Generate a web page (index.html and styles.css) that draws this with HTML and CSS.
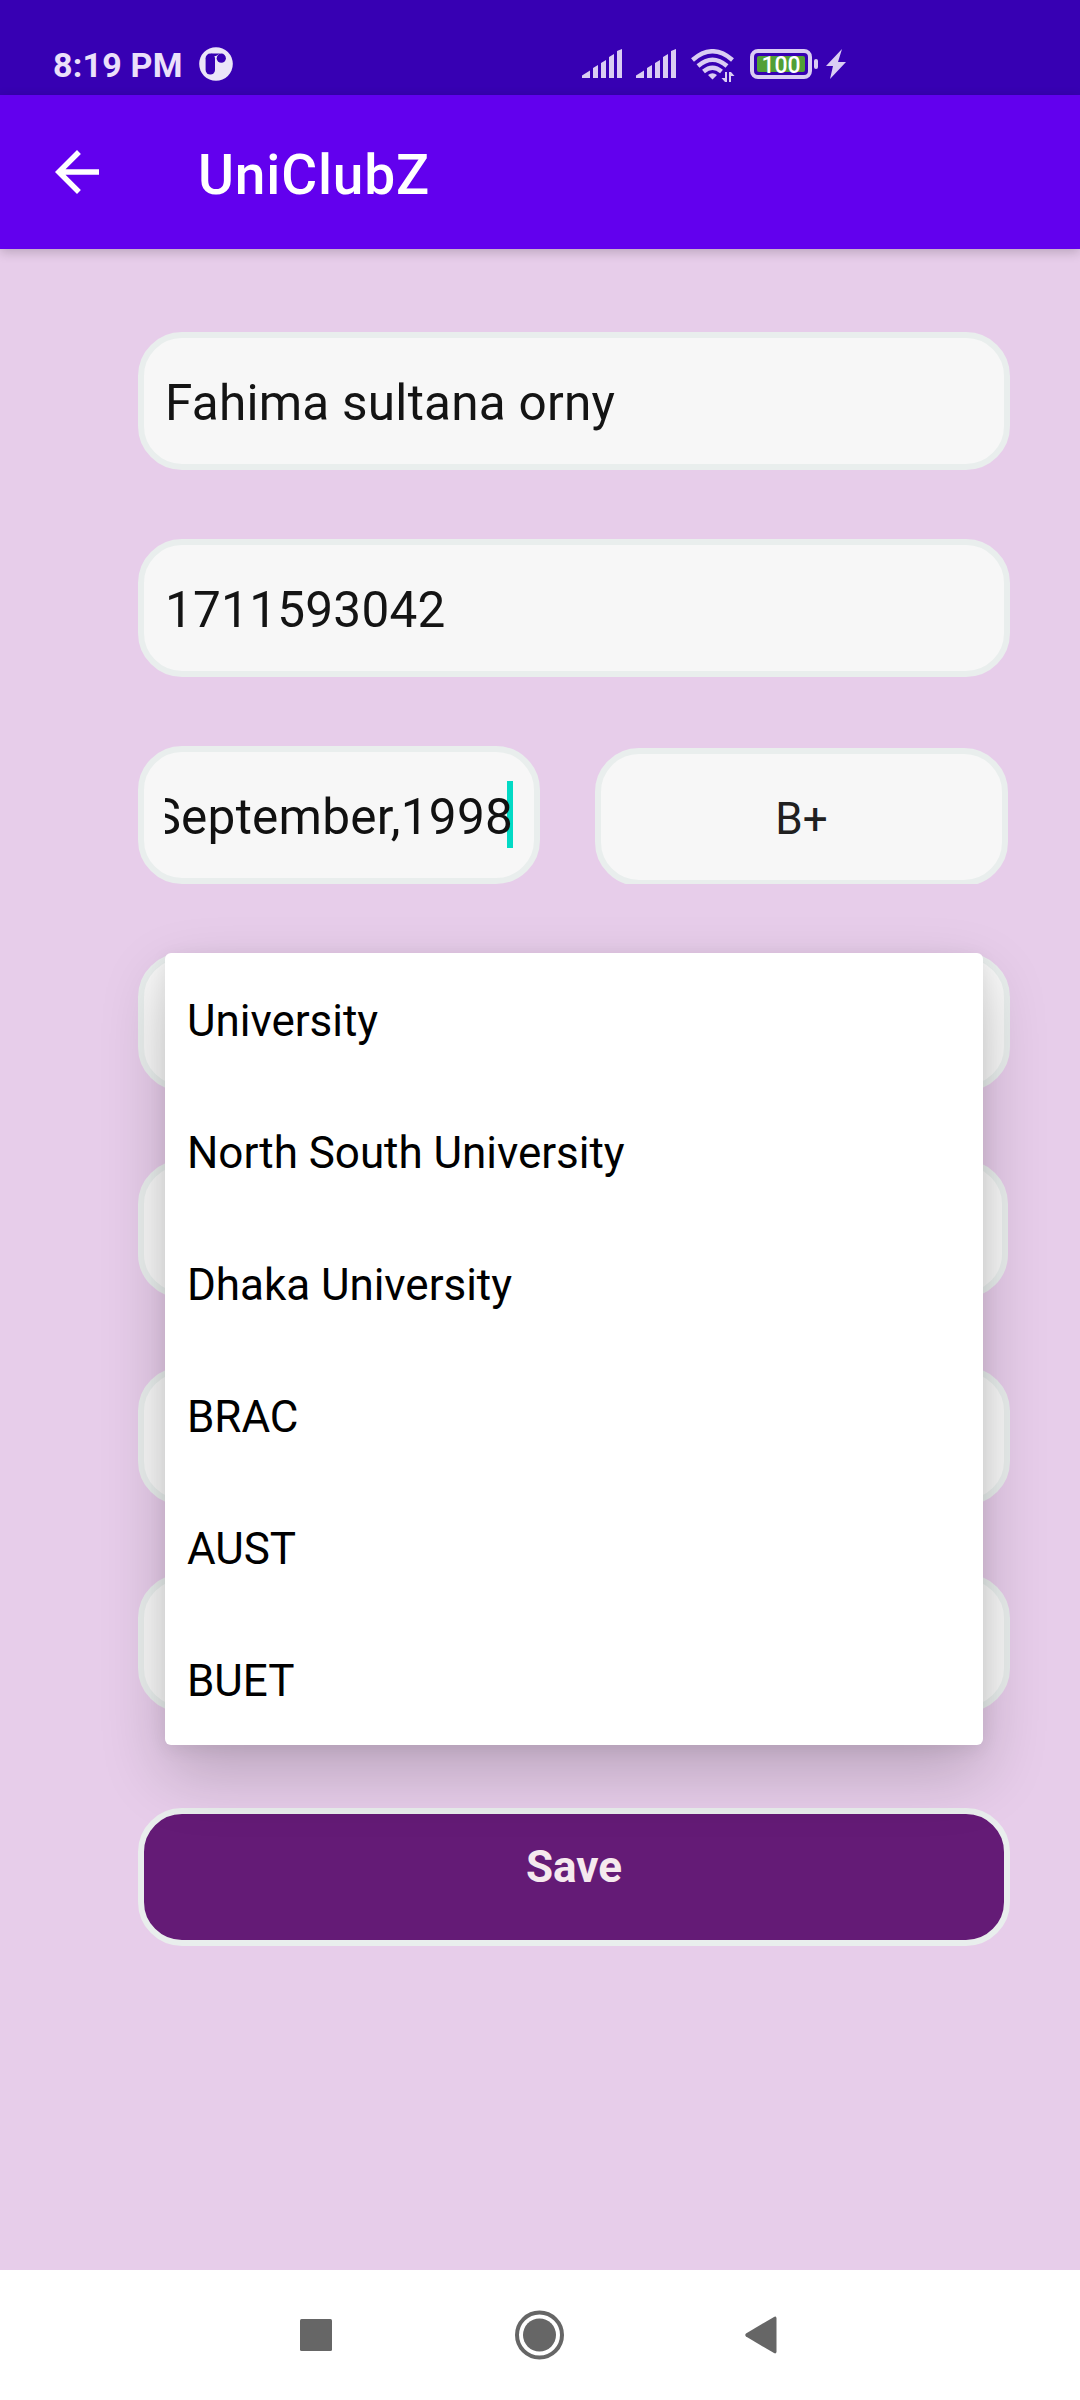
FILE: index.html
```
<!DOCTYPE html>
<html lang="en">
<head>
<meta charset="utf-8">
<title>UniClubZ</title>
<link rel="stylesheet" href="styles.css">
</head>
<body>
<div class="screen">
  <header class="status">
    <span class="time">8:19 PM</span>
    <svg class="notif" width="34" height="34" viewBox="0 0 34 34"><circle cx="17" cy="17" r="16.8" fill="#ebe5f8"/><rect x="6.6" y="6.6" width="9.4" height="21" rx="4.7" fill="#3700b3"/><circle cx="22.3" cy="11.2" r="4.6" fill="#3700b3"/><path d="M12 6.600h9l-4 2.500h-3z" fill="#3700b3"/></svg>
    <div class="indicators">
      <svg class="signal" width="40" height="30" viewBox="0 0 40 30"><path d="M0 29V26.500l8-5v7.500zM11 29V19l5-3v13zM19 29V14l5-3v18zM27 29V8l5-3v24zM35 29V2l5-2v29z"/></svg>
      <svg class="signal second" width="40" height="30" viewBox="0 0 40 30"><path d="M0 29V26.500l8-5v7.500zM11 29V19l5-3v13zM19 29V14l5-3v18zM27 29V8l5-3v24zM35 29V2l5-2v29z"/></svg>
      <svg class="wifi" width="44" height="34" viewBox="0 0 44 34"><g fill="none" stroke="#dacdf3" stroke-width="4.400"><path d="M1.500 11Q21.500 -6.500 41.500 11"/><path d="M7 17Q21.500 4.500 36 17"/><path d="M12.500 22.500Q21.500 15 30.500 22.500"/></g><path d="M17 26q4.500-3.500 9 0L21.500 30.500zM34 23h2v10h-2l-3.500-4H34zM38 33V23h2l3.500 4H40v6z"/></svg>
      <div class="battery"><span class="level">100</span></div>
      <i class="cap"></i>
      <svg class="bolt" width="20" height="30" viewBox="0 0 20 30"><path d="M16 0 0 17h7L4 30l16-17h-8z"/></svg>
    </div>
  </header>
  <div class="appbar">
    <svg width="66" height="66" viewBox="0 0 24 24"><path fill="#fff" d="M20 11H7.830l5.590-5.590L12 4l-8 8 8 8 1.410-1.410L7.830 13H20z"/></svg>
    <h1>UniClubZ</h1>
  </div>
  <main class="form">
    <div class="field">Fahima sultana orny</div>
    <div class="field">1711593042</div>
    <div class="pair">
      <div class="field date"><span class="clip">September,1998</span><i class="caret"></i></div>
      <div class="spinner"><div class="field blood">B+</div></div>
    </div>
    <div class="dropdown-anchor">
      <div class="field"></div>
      <ul class="dropdown">
        <li>University</li>
        <li>North South University</li>
        <li>Dhaka University</li>
        <li>BRAC</li>
        <li>AUST</li>
        <li>BUET</li>
      </ul>
    </div>
    <div class="spinner wide"><div class="field"></div></div>
    <div class="field"></div>
    <div class="field"></div>
    <div class="field save">Save</div>
  </main>
  <nav class="navbar">
    <svg width="32" height="32" viewBox="0 0 32 32"><rect width="32" height="32" rx="1.500"/></svg>
    <svg width="49" height="50" viewBox="0 0 49 50"><circle cx="24.500" cy="25" r="22.500" fill="none" stroke="#666" stroke-width="4"/><circle cx="24.500" cy="25" r="16.500"/></svg>
    <svg width="32" height="38" viewBox="0 0 32 38"><path d="M1 17.500 29 .9q2-.9 2.500 1v34.200q-.5 1.900-2.500 1L1 20.500q-1.500-1.500 0-3z"/></svg>
  </nav>
</div>
</body>
</html>
```
FILE: styles.css
```
* { box-sizing: border-box; }
body { margin: 0; font-family: Roboto, "Liberation Sans", sans-serif; }
.screen {
  width: 1080px;
  height: 2400px;
  display: flex;
  flex-direction: column;
  background: #e7cdea;
  overflow: hidden;
}
.status {
  height: 95px;
  flex: none;
  display: flex;
  align-items: flex-start;
  padding: 47px 0 0 53px;
  background: #3700b3;
}
.time {
  width: 146px;
  line-height: 36px;
  font-size: 34px;
  font-weight: 700;
  letter-spacing: .2px;
  color: #ebe0fa;
  white-space: nowrap;
}
.indicators {
  display: flex;
  align-items: flex-start;
  margin-left: 349px;
  padding-top: 2px;
  fill: #dacdf3;
}
.second { margin-left: 14px; }
.wifi { margin-left: 15px; }
.battery {
  width: 62px;
  height: 30px;
  margin-left: 15px;
  padding: 3px;
  border: 4px solid #dacdf3;
  border-radius: 8px;
}
.level {
  display: block;
  height: 16px;
  border-radius: 2px;
  background: #519f36;
  color: #fff;
  font-size: 23px;
  font-weight: 500;
  line-height: 19px;
  text-align: center;
}
.cap {
  width: 4px;
  height: 10px;
  margin: 10px 8px 0 2px;
  border-radius: 2px;
  background: #dacdf3;
}
.appbar {
  position: relative;
  height: 154px;
  flex: none;
  display: flex;
  align-items: center;
  padding-left: 44px;
  background: #6200ee;
  box-shadow: 0 3px 11px rgba(0, 0, 0, .2);
}
.appbar h1 {
  margin: 5px 0 0 88px;
  font-size: 55px;
  font-weight: 500;
  line-height: 64px;
  letter-spacing: .85px;
  color: #fff;
}
.form {
  flex: 1;
  display: flex;
  flex-direction: column;
  gap: 69px;
  padding: 83px 70px 0 138px;
}
.field {
  height: 138px;
  flex: none;
  display: flex;
  align-items: center;
  padding: 4px 21px 0;
  border: 6px solid #e9eeed;
  border-radius: 44px;
  background: #f7f7f7;
  font-size: 49.5px;
  letter-spacing: .24px;
  color: #141414;
}
.pair { display: flex; gap: 55px; }
.date { position: relative; width: 402px; }
.clip {
  position: relative;
  z-index: 1;
  display: flex;
  justify-content: flex-end;
  width: 348px;
  overflow: hidden;
  color: #111;
}
.caret {
  position: absolute;
  z-index: 0;
  left: 363px;
  top: 29px;
  width: 6px;
  height: 67px;
  background: #03dac5;
}
.spinner { width: 413px; height: 138px; padding-top: 2px; overflow: hidden; }
.spinner.wide { width: 870px; padding-top: 0; }
.blood { justify-content: center; font-size: 44px; letter-spacing: 0; color: #202020; }
.dropdown-anchor { position: relative; }
.dropdown {
  position: absolute;
  z-index: 2;
  left: 27px;
  top: 0;
  width: 818px;
  margin: 0;
  padding: 0;
  list-style: none;
  border-radius: 6px;
  background: #fff;
  box-shadow: 0 28px 66px rgba(0, 0, 0, .2), 0 4px 18px rgba(0, 0, 0, .07);
}
.dropdown li {
  height: 132px;
  padding: 3px 22px 0;
  font-size: 44px;
  line-height: 130px;
  letter-spacing: -.04px;
  color: #000;
}
.save {
  align-items: flex-start;
  justify-content: center;
  margin-top: 27px;
  padding-top: 27px;
  background: #641b76;
  font-size: 44px;
  font-weight: 700;
  line-height: 52px;
  letter-spacing: 0;
  color: #f5e9ee;
}
.navbar {
  height: 130px;
  flex: none;
  display: flex;
  align-items: center;
  padding-left: 300px;
  background: #fff;
  fill: #666;
}
.navbar svg:nth-child(2) { margin: 0 181px 0 183px; }
```
